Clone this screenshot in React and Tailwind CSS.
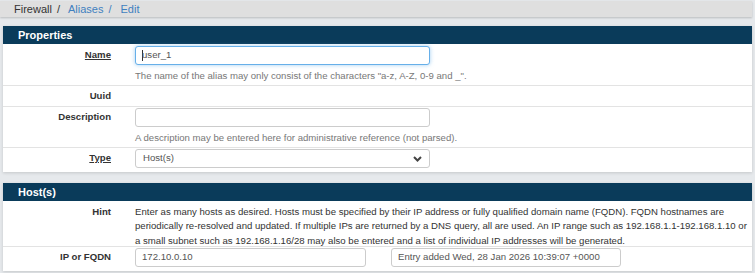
import React from "react";

const Label = ({ children, underline, top = "mt-[2px]" }) => (
  <div className={`w-[108px] shrink-0 h-[19px] flex items-center justify-end text-[9.6px] font-bold text-[#333] ${top}`}>
    <span className={underline ? "underline" : ""}>{children}</span>
  </div>
);

const Input = ({ value, focused, w = "w-[295px]" }) => (
  <div
    className={`${w} h-[19px] rounded-[3px] bg-white border flex items-center px-[6px] text-[9.6px] text-[#555] ${
      focused ? "border-[#66afe9] shadow-[0_0_4px_rgba(102,175,233,0.6)]" : "border-[#ccc]"
    }`}
  >
    {focused && <span className="w-px h-[11px] bg-[#333] -mr-px" />}
    {value}
  </div>
);

const Help = ({ children }) => (
  <p className="mt-[5px] text-[9.6px] leading-[12px] text-[#777]">{children}</p>
);

const Panel = ({ title, children }) => (
  <section className="mx-[3px] bg-white shadow-[0_1px_3px_rgba(0,0,0,0.15)]">
    <div className="h-[18px] bg-[#0a3b5a] text-white text-[11px] font-bold flex items-center pl-[15px]">
      {title}
    </div>
    {children}
  </section>
);

export default function App() {
  return (
    <div className="w-[755px] h-[273px] overflow-hidden bg-[#e6e9ec] font-['Liberation_Sans',Arial,sans-serif]">
      <div className="mt-[1px] mr-[3px] h-[16px] bg-[#dfdfdf] shadow-[0_1px_2px_rgba(0,0,0,0.2)] flex items-center pl-[14px] text-[11px]">
        <span className="text-[#333]">Firewall</span>
        <span className="px-[5px] text-[#333]">/</span>
        <span className="text-[#3f7fc0] pl-[3px]">Aliases</span>
        <span className="px-[5px] text-[#3f7fc0]">/</span>
        <span className="text-[#3f7fc0] pl-[4px]">Edit</span>
      </div>

      <div className="mt-[9px]">
        <Panel title="Properties">
          <div className="h-[42px] flex border-b border-[#e3e3e3]">
            <Label underline>Name</Label>
            <div className="pl-[24px] pt-[2px]">
              <Input value="user_1" focused />
              <Help>The name of the alias may only consist of the characters "a-z, A-Z, 0-9 and _".</Help>
            </div>
          </div>
          <div className="h-[21px] flex border-b border-[#e3e3e3]">
            <Label top="mt-[1px]">Uuid</Label>
          </div>
          <div className="h-[41px] flex border-b border-[#e3e3e3]">
            <Label top="mt-[1px]">Description</Label>
            <div className="pl-[24px] pt-[1px]">
              <Input value="" />
              <Help>A description may be entered here for administrative reference (not parsed).</Help>
            </div>
          </div>
          <div className="h-[24px] flex">
            <Label underline top="mt-[1px]">Type</Label>
            <div className="pl-[24px] pt-[1px]">
              <div className="w-[295px] h-[19px] rounded-[3px] bg-white border border-[#ccc] flex items-center justify-between pl-[7px] pr-[7px] text-[9.6px] text-[#555]">
                <span>Host(s)</span>
                <svg width="9" height="6" viewBox="0 0 9 6">
                  <path d="M1 1l3.5 3.5L8 1" fill="none" stroke="#444" strokeWidth="2" />
                </svg>
              </div>
            </div>
          </div>
        </Panel>
      </div>

      <div className="mt-[11px]">
        <Panel title="Host(s)">
          <div className="h-[46px] flex border-b border-[#e3e3e3]">
            <div className="w-[108px] shrink-0 pt-[4px] text-right text-[9.6px] font-bold text-[#333] leading-[14.4px]">
              Hint
            </div>
            <div className="pl-[24px] pt-[4px] text-[9.6px] leading-[14.4px] text-[#333]">
              <span className="block">
                Enter as many hosts as desired. Hosts must be specified by their IP address or fully qualified domain name (FQDN). FQDN hostnames are
              </span>
              <span className="block">
                periodically re-resolved and updated. If multiple IPs are returned by a DNS query, all are used. An IP range such as 192.168.1.1-192.168.1.10 or
              </span>
              <span className="block">
                a small subnet such as 192.168.1.16/28 may also be entered and a list of individual IP addresses will be generated.
              </span>
            </div>
          </div>
          <div className="h-[24px] flex">
            <Label top="mt-[1px]">IP or FQDN</Label>
            <div className="pl-[24px] pt-[1px] flex gap-[25px]">
              <Input value="172.10.0.10" w="w-[231px]" />
              <Input value="Entry added Wed, 28 Jan 2026 10:39:07 +0000" w="w-[230px]" />
            </div>
          </div>
        </Panel>
      </div>
    </div>
  );
}
